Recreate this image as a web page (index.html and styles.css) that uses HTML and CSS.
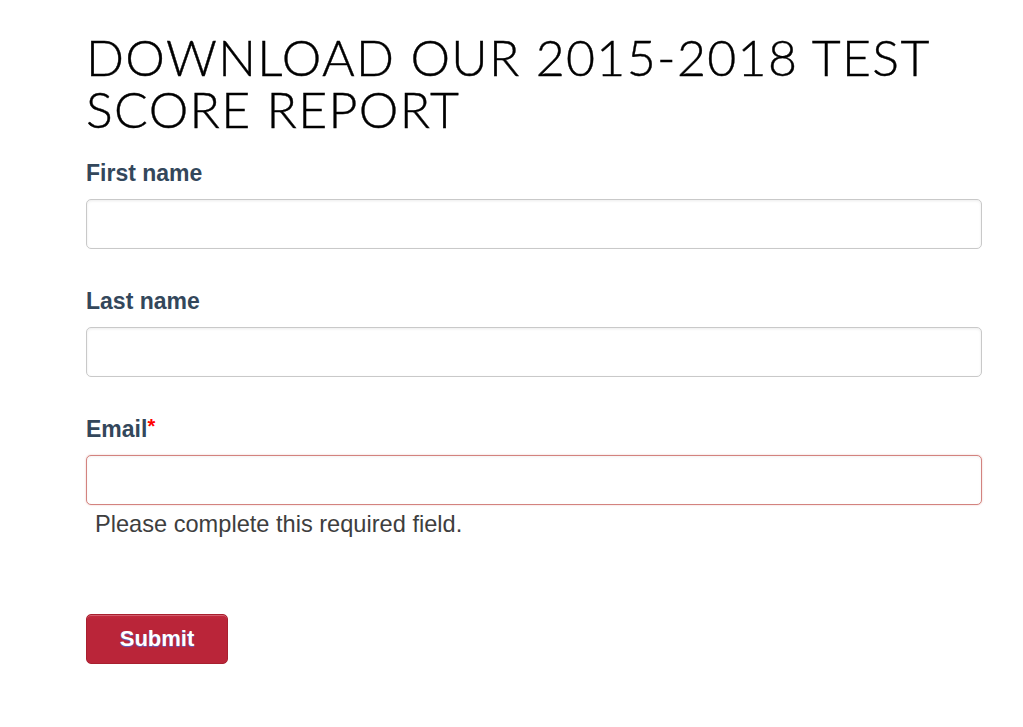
FILE: index.html
```html
<!DOCTYPE html>
<html lang="en">
<head>
<meta charset="utf-8">
<title>Download our 2015-2018 Test Score Report</title>
<link rel="stylesheet" href="styles.css">
</head>
<body>
<main class="page">
  <h1 class="title">DOWNLOAD OUR 2015-2018 TEST SCORE REPORT</h1>
  <form class="form" novalidate>
    <div class="field">
      <label class="label" for="firstname">First name</label>
      <input class="input" id="firstname" type="text">
    </div>
    <div class="field">
      <label class="label" for="lastname">Last name</label>
      <input class="input" id="lastname" type="text">
    </div>
    <div class="field">
      <label class="label" for="email">Email<span class="req">*</span></label>
      <input class="input input-error" id="email" type="email">
      <p class="error">Please complete this required field.</p>
    </div>
    <div class="actions">
      <button class="submit" type="button">Submit</button>
    </div>
  </form>
</main>
</body>
</html>
```
FILE: styles.css
```css
html, body {
  margin: 0;
  padding: 0;
  background: #ffffff;
}

.page {
  padding: 31px 41px 0 86px;
  width: 896px;
}

.title {
  margin: 0;
  font-family: Lato, "Open Sans", sans-serif;
  font-weight: 300;
  font-size: 50px;
  line-height: 52px;
  color: #000000;
  letter-spacing: 1.35px;
  -webkit-text-stroke: 0.4px #000000;
}

.form {
  display: flex;
  flex-direction: column;
  margin-top: 24px;
}

.field {
  display: flex;
  flex-direction: column;
  margin-bottom: 38px;
}

.label {
  font-family: "Liberation Sans", Arial, sans-serif;
  font-weight: 700;
  font-size: 23px;
  line-height: 28px;
  color: #33475b;
  margin-bottom: 12px;
}

.req {
  color: #ff0000;
  font-size: 20px;
  vertical-align: top;
  line-height: 22px;
}

.input {
  box-sizing: border-box;
  width: 896px;
  height: 50px;
  margin: 0;
  padding: 0 12px;
  border: 1px solid #c9c9c9;
  border-radius: 5px;
  background: #ffffff;
  box-shadow: inset 0 1px 3px rgba(0, 0, 0, 0.08);
  font-family: "Liberation Sans", Arial, sans-serif;
  font-size: 20px;
}

.input-error {
  border-color: #d3837f;
  box-shadow: 0 0 2px rgba(200, 80, 70, 0.35), inset 0 1px 3px rgba(0, 0, 0, 0.05);
}

.error {
  margin: 6px 0 0 9px;
  font-family: "Liberation Sans", Arial, sans-serif;
  font-size: 23.6px;
  line-height: 26px;
  color: #3e3e3e;
}

.actions {
  margin-top: 39px;
}

.submit {
  width: 142px;
  height: 50px;
  border: 1px solid #a8202f;
  border-radius: 5px;
  background: linear-gradient(#c42a3e, #ba2539 10%, #ba2539);
  box-shadow: inset 0 1px 0 rgba(255, 255, 255, 0.25);
  color: #ffffff;
  font-family: "Liberation Sans", Arial, sans-serif;
  font-weight: 700;
  font-size: 22px;
  text-shadow: 0 1px 1px rgba(70, 110, 230, 0.8);
  cursor: pointer;
}
```
